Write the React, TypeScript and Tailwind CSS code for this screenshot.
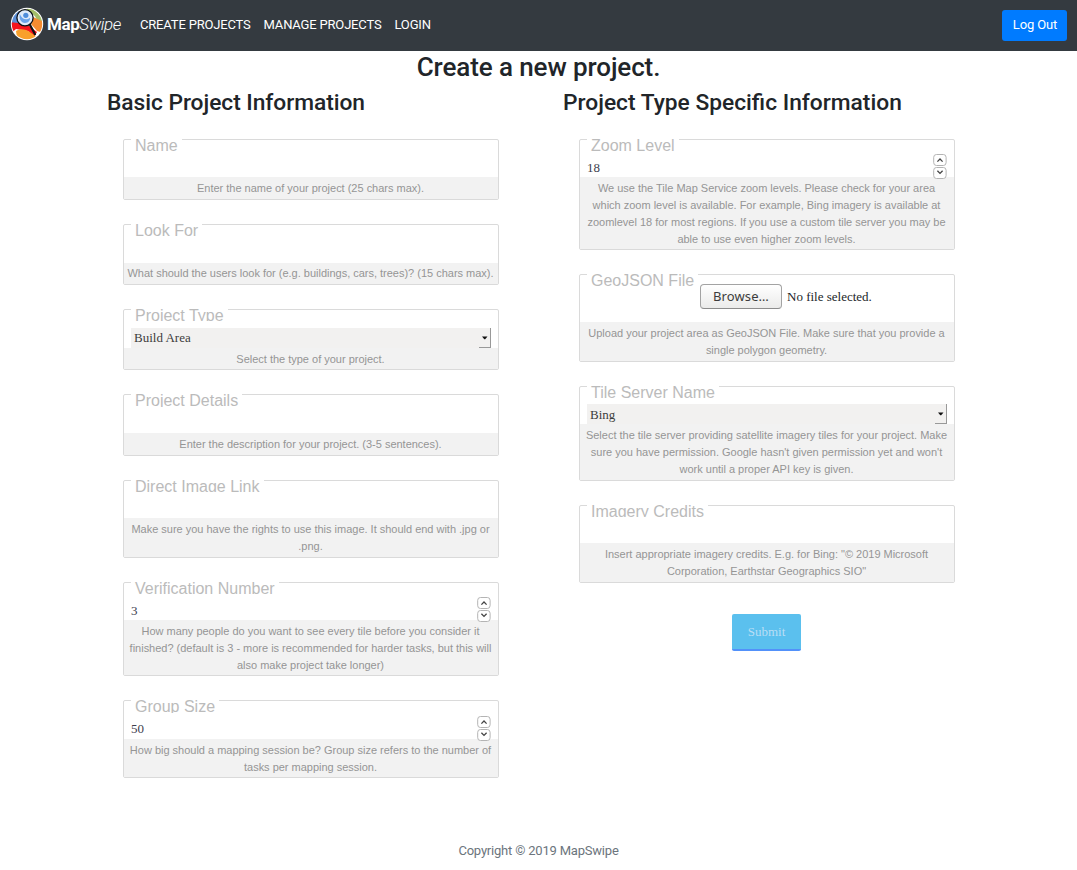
import type { ReactNode } from "react";

const serif = "font-['Liberation_Serif',serif]";

function Field({
  label,
  labelSize = "h-[13px]",
  body,
  help,
  children,
}: {
  label: string;
  labelSize?: string;
  /* height class of the area above the help text, and the help block's own height */
  body: string;
  help: { size: string; lines: string[] };
  children?: ReactNode;
}) {
  return (
    <fieldset className="relative mb-6 w-[376px] rounded-[2px] border border-[#dadada] bg-white">
      <span
        className={`absolute -top-px left-[7px] overflow-hidden bg-white px-1 font-['Liberation_Sans',sans-serif] text-[16px] leading-[14px] whitespace-nowrap text-[#bbb] ${labelSize}`}
      >
        {label}
      </span>
      <div className={`flex items-end px-[7px] ${body}`}>{children}</div>
      <div
        className={`bg-[#f2f2f2] pr-px text-center font-['Liberation_Sans',sans-serif] text-[11px] leading-[17px] tracking-[-0.01px] whitespace-nowrap text-[#959595] ${help.size}`}
      >
        {help.lines.map((line) => (
          <p key={line}>{line}</p>
        ))}
      </div>
    </fieldset>
  );
}

function StepButton({ up }: { up?: boolean }) {
  return (
    <svg width="14" height="12" viewBox="0 0 14 12" className="block">
      <rect x="0.7" y="0.5" width="12.4" height="11" rx="2.8" fill="#fff" stroke="#b4b4b4" />
      <path
        d={up ? "M4.4 7.6 L7 5 L9.6 7.6" : "M4.4 3.8 L7 6.4 L9.6 3.8"}
        fill="none"
        stroke="#444"
        strokeWidth="1.3"
      />
    </svg>
  );
}

function NumberInput({ value, raised }: { value: string; raised?: boolean }) {
  return (
    <div className={`flex h-[18px] w-full items-center justify-between text-[13px] leading-[18px] text-[#3d3d4d] ${serif}`}>
      <span className={raised ? "pb-[2px]" : ""}>{value}</span>
      <span className="relative -top-[2px] flex flex-col gap-px">
        <StepButton up />
        <StepButton />
      </span>
    </div>
  );
}

function SelectInput({ value, lowered }: { value: string; lowered?: boolean }) {
  return (
    <div className={`flex h-5 w-[360px] items-center justify-between bg-[#f2f1f0] pl-[3px] text-[13px] leading-5 text-[#3d3d3d] ${serif}`}>
      <span className={lowered ? "pt-[2px]" : ""}>{value}</span>
      <span className="flex h-5 w-3 items-center justify-center border-r border-b border-[#999]">
        <svg width="7" height="4" viewBox="0 0 7 4">
          <path d="M1 0.5 H6.5 L4.2 3.2 H3.3 Z" fill="#111" />
        </svg>
      </span>
    </div>
  );
}

function Logo() {
  return (
    <svg width="34" height="34" viewBox="0 0 34 34">
      <defs>
        <clipPath id="disc">
          <circle cx="17" cy="17" r="15.2" />
        </clipPath>
      </defs>
      <circle cx="17" cy="17" r="16.2" fill="#fff" />
      <g clipPath="url(#disc)">
        <path d="M0 10 L9 4 L12 20 L0 17Z" fill="#5b8ed6" />
        <path d="M18 0 C26 3 31 8 34 15 L27 13 C25 8 21 5 16 3Z" fill="#a3bd68" />
        <path d="M0 15 L8 16 L18 18 L23 22 L27 25 L24 30 L18 24 L6 22 L0 27Z" fill="#f5141c" />
        <path d="M23 10 L34 15 L34 26 L27 24 L21 17Z" fill="#f58c32" />
        <path d="M6 24 C12 20 19 23 26 30 L19 34 L7 31Z" fill="#f9a02b" />
      </g>
      <path d="M19.5 17 L25 27.2" stroke="#111" strokeWidth="2.2" strokeLinecap="round" />
      <circle cx="15" cy="10.8" r="8.1" fill="#dfeafa" stroke="#0c1118" strokeWidth="1.3" />
      <circle cx="15.8" cy="8.3" r="2.6" fill="#4f8ddb" />
      <path d="M9.8 7 C8.8 12 11 15.6 15 16 C18.6 15.8 20.2 13.5 20 10.8 C16 14 12 12 9.8 7Z" fill="#6ba3ea" />
    </svg>
  );
}

export default function App() {
  return (
    <div className="flex h-[870px] w-full flex-col bg-white font-['Roboto',sans-serif] text-[13px] text-[#212529]">
      <nav className="flex h-[51px] shrink-0 items-center justify-between bg-[#343a40] px-[10px] text-white">
        <div className="flex items-center pb-[3px]">
          <Logo />
          <span className="ml-[3px] w-[93px] text-[17px] leading-6 tracking-[-0.4px]">
            <b className="font-bold">Map</b>
            <i className="font-light">Swipe</i>
          </span>
          <div className="flex gap-[13px] pt-[2px] leading-5 tracking-[-0.18px]">
            <a>CREATE PROJECTS</a>
            <a>MANAGE PROJECTS</a>
            <a>LOGIN</a>
          </div>
        </div>
        <button className="h-[31px] w-[65px] rounded-[3px] bg-[#007bff] pb-[2px] pl-px text-[13px] tracking-[-0.14px]">
          Log Out
        </button>
      </nav>

      <h1 className="mt-px h-[31px] text-center text-[26px] leading-[31px] font-medium tracking-[-0.1px]">Create a new project.</h1>

      <main className="flex pl-[107px]">
        <section className="w-[456px]">
          <h2 className="mt-[6px] h-[27px] text-[22.75px] leading-[27px] font-medium tracking-[-0.04px]">Basic Project Information</h2>
          <div className="pt-[23px] pl-4">
            <Field label="Name" body="h-[37px]" help={{ size: "h-[22px] pt-[3px]", lines: ["Enter the name of your project (25 chars max)."] }} />
            <Field
              label="Look For"
              body="h-[38px]"
              help={{ size: "h-[21px] pt-[2px]", lines: ["What should the users look for (e.g. buildings, cars, trees)? (15 chars max)."] }}
            />
            <Field
              label="Project Type"
              labelSize="h-[12px]"
              body="h-[38px]"
              help={{ size: "h-[21px] pt-[3px]", lines: ["Select the type of your project."] }}
            >
              <SelectInput value="Build Area" />
            </Field>
            <Field
              label="Project Details"
              body="h-[38px]"
              help={{ size: "h-[22px] pt-[3px]", lines: ["Enter the description for your project. (3-5 sentences)."] }}
            />
            <Field
              label="Direct Image Link"
              labelSize="h-[12px]"
              body="h-[37px]"
              help={{
                size: "h-[39px] pt-[3px]",
                lines: ["Make sure you have the rights to use this image. It should end with .jpg or", ".png."],
              }}
            />
            <Field
              label="Verification Number"
              body="h-[37px]"
              help={{
                size: "h-[55px] pt-[3px]",
                lines: [
                  "How many people do you want to see every tile before you consider it",
                  "finished? (default is 3 - more is recommended for harder tasks, but this will",
                  "also make project take longer)",
                ],
              }}
            >
              <NumberInput value="3" />
            </Field>
            <Field
              label="Group Size"
              body="h-[38px]"
              help={{
                size: "h-[38px] pt-[3px]",
                lines: ["How big should a mapping session be? Group size refers to the number of", "tasks per mapping session."],
              }}
            >
              <NumberInput value="50" raised />
            </Field>
          </div>
        </section>

        <section className="w-[456px]">
          <h2 className="mt-[6px] h-[27px] text-[22.75px] leading-[27px] font-medium">Project Type Specific Information</h2>
          <div className="pt-[23px] pl-4">
            <Field
              label="Zoom Level"
              body="h-[37px]"
              help={{
                size: "h-[72px] pt-[3px]",
                lines: [
                  "We use the Tile Map Service zoom levels. Please check for your area",
                  "which zoom level is available. For example, Bing imagery is available at",
                  "zoomlevel 18 for most regions. If you use a custom tile server you may be",
                  "able to use even higher zoom levels.",
                ],
              }}
            >
              <NumberInput value="18" />
            </Field>
            <Field
              label="GeoJSON File"
              body="h-[47px]"
              help={{
                size: "h-[39px] pt-[3px]",
                lines: ["Upload your project area as GeoJSON File. Make sure that you provide a", "single polygon geometry."],
              }}
            >
              <div className="mb-[13px] flex items-center gap-[5px] pl-[113px]">
                <button className="h-[25px] w-[82px] rounded-[4px] border border-[#a3a3a3] border-b-[#8c8c8c] bg-linear-to-b from-white to-[#ebebea] pb-px font-['Noto_Sans',sans-serif] text-[13px] leading-[21px] tracking-[0.1px] text-[#3c3c3c]">
                  Browse…
                </button>
                <span className={`text-[13px] ${serif}`}>No file selected.</span>
              </div>
            </Field>
            <Field
              label="Tile Server Name"
              body="h-[37px]"
              help={{
                size: "h-[56px] pt-[3px]",
                lines: [
                  "Select the tile server providing satellite imagery tiles for your project. Make",
                  "sure you have permission. Google hasn't given permission yet and won't",
                  "work until a proper API key is given.",
                ],
              }}
            >
              <SelectInput value="Bing" lowered />
            </Field>
            <Field
              label="Imagery Credits"
              labelSize="h-[12px]"
              body="h-[37px]"
              help={{
                size: "h-[39px] pt-[3px]",
                lines: ['Insert appropriate imagery credits. E.g. for Bing: "© 2019 Microsoft', 'Corporation, Earthstar Geographics SIO"'],
              }}
            />
            <div className="flex w-[375px] justify-center pt-[7px]">
              <button
                className={`h-[37px] w-[69px] rounded-[2px] border-b-2 border-[#5291fa] bg-[#5bc0ee] text-[13px] text-[#b9def5] ${serif}`}
              >
                Submit
              </button>
            </div>
          </div>
        </section>
      </main>

      <footer className="mt-auto pb-[9px] text-center leading-5 tracking-[-0.2px] text-[#6c757d]">Copyright © 2019 MapSwipe</footer>
    </div>
  );
}
